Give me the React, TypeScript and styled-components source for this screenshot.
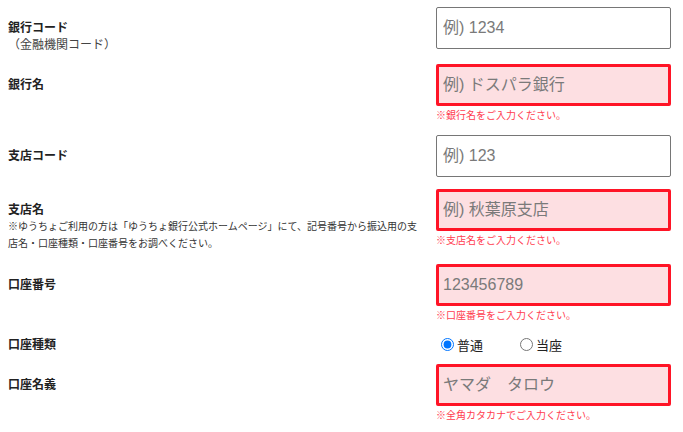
import { createGlobalStyle, styled } from "styled-components";

const GlobalStyle = createGlobalStyle`
    body {
        margin: 0;
        background: #fff;
        font-family: "Liberation Sans", "Noto Sans CJK JP", sans-serif;
        color: #222;
    }
`

const Form = styled.div`
    padding: 7px 12px 0 8px;
`

const Row = styled.div`
    display: grid;
    grid-template-columns: 428px 235px;
    margin-bottom: 12px;
`

const LabelCell = styled.div<{ $flat?: boolean }>`
    padding-top: ${(p) => (p.$flat ? "3px" : "13px")};
    padding-right: 16px;
    font-size: 12px;
    line-height: ${(p) => (p.$flat ? "14px" : "17px")};
`

const Title = styled.div`
    font-weight: bold;
    color: #222;
`

const Sub = styled.div`
    color: #444;
    margin-bottom: -2px;
`

const Note = styled.div`
    font-size: 10px;
    line-height: 17px;
    color: #333;
    margin-top: -1px;
`

const Field = styled.div`
    display: flex;
    flex-direction: column;
`

const Input = styled.input<{ $error?: boolean }>`
    box-sizing: border-box;
    width: 235px;
    height: 42px;
    margin: 0;
    border: ${(p) => (p.$error ? "3px solid #ff1426" : "1px solid #767676")};
    border-radius: 2px;
    background: ${(p) => (p.$error ? "#fddfe2" : "#fff")};
    padding: 0 0 0 ${(p) => (p.$error ? "4px" : "6px")};
    font-family: "Liberation Sans", "Noto Sans CJK JP", sans-serif;
    font-size: 16px;
    outline: none;
    &::placeholder {
        color: #7a7a7a;
    }
`

const Error = styled.div`
    margin-top: 3px;
    font-size: 10px;
    line-height: 14px;
    color: #ff3d50;
`

const Radios = styled.div`
    display: flex;
    align-items: center;
    gap: 32px;
    height: 17px;
    padding-top: 1px;
    box-sizing: border-box;
    font-size: 13px;
`

const RadioLabel = styled.label`
    display: flex;
    align-items: center;
    color: #222;
    input {
        margin: 0 3px 0 5px;
        width: 13px;
        height: 13px;
    }
`

export default function App() {
    return (
        <Form>
            <GlobalStyle />
            <Row>
                <LabelCell>
                    <Title>銀行コード</Title>
                    <Sub>（金融機関コード）</Sub>
                </LabelCell>
                <Field>
                    <Input placeholder="例) 1234" />
                </Field>
            </Row>
            <Row>
                <LabelCell>
                    <Title>銀行名</Title>
                </LabelCell>
                <Field>
                    <Input $error placeholder="例) ドスパラ銀行" />
                    <Error>※銀行名をご入力ください。</Error>
                </Field>
            </Row>
            <Row>
                <LabelCell>
                    <Title>支店コード</Title>
                </LabelCell>
                <Field>
                    <Input placeholder="例) 123" />
                </Field>
            </Row>
            <Row>
                <LabelCell>
                    <Title>支店名</Title>
                    <Note>
                        ※ゆうちょご利用の方は「ゆうちょ銀行公式ホームページ」にて、記号番号から振込用の支店名・口座種類・口座番号をお調べください。
                    </Note>
                </LabelCell>
                <Field>
                    <Input $error placeholder="例) 秋葉原支店" />
                    <Error>※支店名をご入力ください。</Error>
                </Field>
            </Row>
            <Row>
                <LabelCell>
                    <Title>口座番号</Title>
                </LabelCell>
                <Field>
                    <Input $error placeholder="123456789" />
                    <Error>※口座番号をご入力ください。</Error>
                </Field>
            </Row>
            <Row>
                <LabelCell $flat>
                    <Title>口座種類</Title>
                </LabelCell>
                <Radios>
                    <RadioLabel>
                        <input type="radio" name="kind" defaultChecked />
                        普通
                    </RadioLabel>
                    <RadioLabel>
                        <input type="radio" name="kind" />
                        当座
                    </RadioLabel>
                </Radios>
            </Row>
            <Row>
                <LabelCell>
                    <Title>口座名義</Title>
                </LabelCell>
                <Field>
                    <Input $error placeholder="ヤマダ　タロウ" />
                    <Error>※全角カタカナでご入力ください。</Error>
                </Field>
            </Row>
        </Form>
    )
}
